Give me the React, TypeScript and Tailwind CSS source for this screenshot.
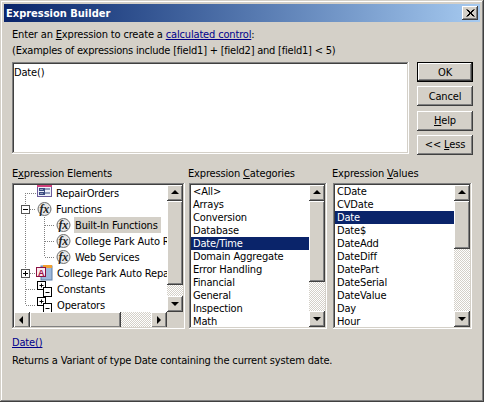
const raised =
  "bg-[#d4d0c8] shadow-[inset_-1px_-1px_#404040,inset_1px_1px_#ffffff,inset_-2px_-2px_#808080,inset_2px_2px_#d4d0c8]";
const sunken =
  "shadow-[inset_-1px_-1px_#ffffff,inset_1px_1px_#808080,inset_-2px_-2px_#d4d0c8,inset_2px_2px_#404040]";
const dither = "bg-[repeating-conic-gradient(#d4d0c8_0_25%,#ffffff_0_50%)] bg-[length:2px_2px]";

const Arrow = ({ dir }: { dir: "up" | "down" | "left" | "right" }) => {
  const pts = {
    up: "4,9 8,5 12,9",
    down: "4,6 8,10 12,6",
    left: "9,4 5,8 9,12",
    right: "6,4 10,8 6,12",
  };
  return (
    <svg width="16" height="16" viewBox="0 0 16 16" className="block">
      <polygon points={pts[dir]} fill="#000" />
    </svg>
  );
};

const ScrollBtn = ({ dir }: { dir: "up" | "down" | "left" | "right" }) => (
  <div className={`h-4 w-4 shrink-0 ${raised}`}>
    <Arrow dir={dir} />
  </div>
);

const VScroll = ({ thumb }: { thumb: number }) => (
  <div className="flex h-full w-4 shrink-0 flex-col">
    <ScrollBtn dir="up" />
    <div className={`min-h-0 flex-1 ${dither}`}>
      <div className={raised} style={{ height: thumb }} />
    </div>
    <ScrollBtn dir="down" />
  </div>
);

const FxIcon = ({ x }: { x: number }) => (
  <g>
    <circle cx={x + 7.5} cy="8" r="6.5" fill="#e8e8e8" stroke="#6e6e6e" />
    <text x={x + 2.5} y="11.5" fontFamily="'Liberation Serif', serif" fontStyle="italic" fontWeight="bold" fontSize="12" fill="#222">
      fx
    </text>
  </g>
);

const Plus = ({ x, y, open }: { x: number; y: number; open?: boolean }) => (
  <g>
    <rect x={x + 0.5} y={y + 0.5} width="8" height="8" fill="#fff" stroke="#555" />
    <path d={`M${x + 2} ${y + 4.5}h5`} stroke="#000" />
    {!open && <path d={`M${x + 4.5} ${y + 2}v5`} stroke="#000" />}
  </g>
);

const dots = { stroke: "#808080", strokeDasharray: "1 1" };

const TableIcon = () => (
  <g>
    <rect x="23.5" y="-0.5" width="14" height="12" fill="#eef0fa" stroke="#6a5a9a" />
    <rect x="23" y="-1" width="15" height="3" fill="#d0407a" />
    <path d="M25 4h4M25 8h4M31 4h5M31 8h5M30.5 3v7" stroke="#3a4a80" />
    <rect x="25.5" y="3.5" width="4" height="2" fill="none" stroke="#3a4a80" />
    <rect x="25.5" y="7.5" width="4" height="2" fill="none" stroke="#3a4a80" />
  </g>
);

const AccessIcon = () => (
  <g>
    <rect x="27" y="1" width="11" height="14" fill="#9db8dc" stroke="#5f7fa8" />
    <rect x="29" y="0" width="9" height="3" fill="#f0a030" />
    <rect x="22.5" y="2.5" width="9" height="9" fill="#fbe9f0" stroke="#8a1040" />
    <text x="24" y="10.5" fontFamily="'Liberation Sans', sans-serif" fontWeight="bold" fontSize="9" fill="#a01048">
      A
    </text>
  </g>
);

const StackIcon = () => (
  <g>
    <rect x="23.5" y="0.5" width="8" height="8" fill="#fff" stroke="#000" />
    <path d="M25.5 4.5h4M27.5 2.5v4" stroke="#000" />
    <rect x="29.5" y="6.5" width="8" height="9" fill="#fff" stroke="#000" />
    <path d="M31.5 11.5h4" stroke="#000" />
  </g>
);

type TreeRow = { label: string; gutter: number; art: React.ReactNode; active?: boolean };

const treeRows: TreeRow[] = [
  {
    label: "RepairOrders",
    gutter: 41,
    art: (
      <>
        <path d="M11.5 8V16M11 8.5H22" {...dots} />
        <TableIcon />
      </>
    ),
  },
  {
    label: "Functions",
    gutter: 41,
    art: (
      <>
        <path d="M11.5 0V4M11.5 12V16M16 8.5H22" {...dots} />
        <Plus x={7} y={4} open />
        <FxIcon x={23} />
      </>
    ),
  },
  {
    label: "Built-In Functions",
    gutter: 60,
    active: true,
    art: (
      <>
        <path d="M11.5 0V16M30.5 0V16M31 8.5H41" {...dots} />
        <FxIcon x={42} />
      </>
    ),
  },
  {
    label: "College Park Auto Repair Functions",
    gutter: 60,
    art: (
      <>
        <path d="M11.5 0V16M30.5 0V16M31 8.5H41" {...dots} />
        <FxIcon x={42} />
      </>
    ),
  },
  {
    label: "Web Services",
    gutter: 60,
    art: (
      <>
        <path d="M11.5 0V16M30.5 0V8M31 8.5H41" {...dots} />
        <FxIcon x={42} />
      </>
    ),
  },
  {
    label: "College Park Auto Repair",
    gutter: 42,
    art: (
      <>
        <path d="M11.5 0V4M11.5 12V16M16 8.5H22" {...dots} />
        <Plus x={7} y={4} />
        <AccessIcon />
      </>
    ),
  },
  {
    label: "Constants",
    gutter: 42,
    art: (
      <>
        <path d="M11.5 0V16M12 8.5H22" {...dots} />
        <StackIcon />
      </>
    ),
  },
  {
    label: "Operators",
    gutter: 42,
    art: (
      <>
        <path d="M11.5 0V8M12 8.5H22" {...dots} />
        <StackIcon />
      </>
    ),
  },
];

const categories = [
  "<All>",
  "Arrays",
  "Conversion",
  "Database",
  "Date/Time",
  "Domain Aggregate",
  "Error Handling",
  "Financial",
  "General",
  "Inspection",
  "Math",
];
const values = ["CDate", "CVDate", "Date", "Date$", "DateAdd", "DateDiff", "DatePart", "DateSerial", "DateValue", "Day", "Hour"];

const ListBox = ({ items, selected, thumb, className }: { items: string[]; selected: string; thumb: number; className: string }) => (
  <div className={`relative h-[146px] bg-white p-0.5 ${className}`}>
    <div className="flex h-full">
      <ul className="min-w-0 flex-1 overflow-hidden">
        {items.map((item) => (
          <li
            key={item}
            className={`h-[13px] pl-0.5 leading-[13px] ${item === selected ? "bg-[#0a246a] text-white" : ""}`}
          >
            {item}
          </li>
        ))}
      </ul>
      <VScroll thumb={thumb} />
    </div>
    <div className={`pointer-events-none absolute inset-0 ${sunken}`} />
  </div>
);

const Button = ({ children, isDefault }: { children: React.ReactNode; isDefault?: boolean }) => (
  <div className={isDefault ? "h-[20px] border border-black" : "h-[20px]"}>
    <div className={`flex h-full items-center justify-center ${raised}`}>{children}</div>
  </div>
);

export default function App() {
  return (
    <div className="flex h-[402px] w-[484px] flex-col overflow-hidden bg-[#d4d0c8] p-1 font-['DejaVu_Sans_Condensed','DejaVu_Sans',sans-serif] text-[11px] leading-[13px] tracking-[-0.16px] text-black shadow-[inset_-1px_-1px_#404040,inset_1px_1px_#d4d0c8,inset_-2px_-2px_#808080,inset_2px_2px_#ffffff]">
      <div className="flex h-[18px] shrink-0 items-center justify-between bg-gradient-to-r from-[#0a246a] to-[#a6caf0] pr-0.5 pl-0.5 font-bold tracking-normal text-white">
        <span>Expression Builder</span>
        <div className={`h-3.5 w-4 ${raised}`}>
          <svg width="16" height="14" viewBox="0 0 16 14" className="block">
            <path d="M4.5 3.5l7 7M5.5 3.5l7 7M11.5 3.5l-7 7M12.5 3.5l-7 7" stroke="#000" />
          </svg>
        </div>
      </div>

      <div className="flex flex-1 flex-col px-2 pt-1.5">
        <p>
          Enter an <span className="underline">E</span>xpression to create a{" "}
          <a className="text-[#00008b] underline">calculated control</a>:
        </p>
        <p className="mt-[3px] tracking-[-0.22px]">(Examples of expressions include [field1] + [field2] and [field1] &lt; 5)</p>

        <div className="mt-[5px] flex">
          <div className={`h-[92px] w-[397px] shrink-0 bg-white pt-1 pl-0.5 ${sunken}`}>Date()</div>
          <div className="ml-2 flex w-[56px] shrink-0 flex-col gap-[4.33px]">
            <Button isDefault>OK</Button>
            <Button>Cancel</Button>
            <Button>
              <span>
                <span className="underline">H</span>elp
              </span>
            </Button>
            <Button>
              <span>
                &lt;&lt; <span className="underline">L</span>ess
              </span>
            </Button>
          </div>
        </div>

        <div className="mt-3 flex">
          <div className="w-[176px]">
            E<span className="underline">x</span>pression Elements
          </div>
          <div className="w-[144px]">
            Expression <span className="underline">C</span>ategories
          </div>
          <div>
            Expression <span className="underline">V</span>alues
          </div>
        </div>

        <div className="mt-[3px] flex">
          <div className="relative h-[146px] w-[173px] shrink-0 bg-white p-0.5">
            <div className="flex h-[127px]">
              <div className="min-w-0 flex-1 overflow-hidden">
                {treeRows.map((row) => (
                  <div key={row.label} className="flex h-4 items-center whitespace-nowrap">
                    <svg width={row.gutter} height="16" viewBox={`0 0 ${row.gutter} 16`} className="shrink-0">
                      {row.art}
                    </svg>
                    <span className={`h-4 pl-px leading-[18px] ${row.active ? "bg-[#d4d0c8] pr-[3px]" : "pr-px"}`}>{row.label}</span>
                  </div>
                ))}
              </div>
              <VScroll thumb={84} />
            </div>
            <div className="flex h-4 w-[169px]">
              <ScrollBtn dir="left" />
              <div className={`min-w-0 flex-1 ${dither}`}>
                <div className={`h-4 w-[91px] ${raised}`} />
              </div>
              <ScrollBtn dir="right" />
              <div className="h-4 w-4 bg-[#d4d0c8]" />
            </div>
            <div className={`pointer-events-none absolute inset-0 ${sunken}`} />
          </div>
          <ListBox items={categories} selected="Date/Time" thumb={81} className="ml-1 w-[138px] shrink-0" />
          <ListBox items={values} selected="Date" thumb={48} className="ml-1.5 w-[139px] shrink-0" />
        </div>

        <a className="mt-[7px] self-start text-[#00008b] underline">Date()</a>
        <p className="mt-[5px]">Returns a Variant of type Date containing the current system date.</p>
      </div>
    </div>
  );
}
